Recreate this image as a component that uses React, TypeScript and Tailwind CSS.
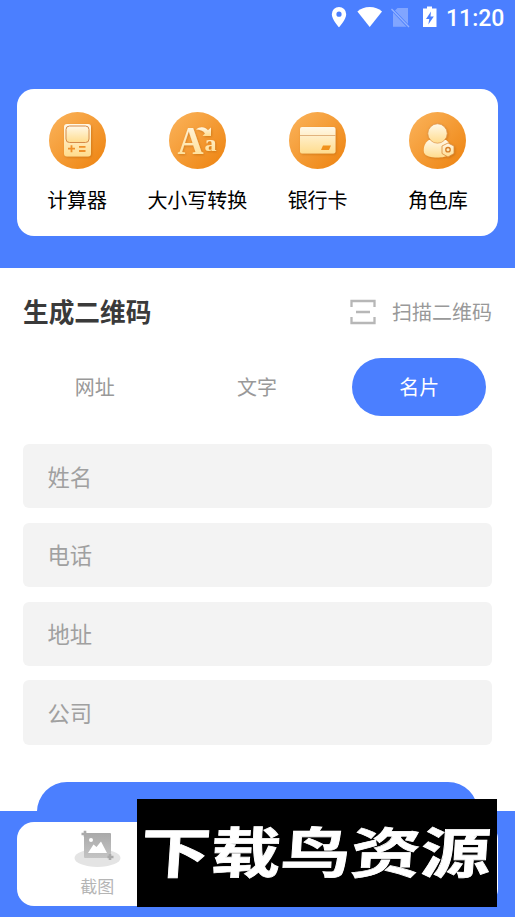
import { useState } from "react";
import type { ReactNode } from "react";

const tabs = ["网址", "文字", "名片"];
const fields = ["姓名", "电话", "地址", "公司"];

function StatusBar() {
    return (
        <div className="flex h-9 items-center justify-end pr-3 text-white">
            <svg className="h-9 w-[120px]" viewBox="0 0 120 36" fill="currentColor">
                <path fillRule="evenodd" d="M13 7a7.200 7.200 0 0 0-7.200 7.200c0 5.200 7.200 13 7.200 13s7.200-7.800 7.200-13A7.200 7.200 0 0 0 13 7Zm0 4.600a2.600 2.600 0 1 1 0 5.200 2.600 2.600 0 0 1 0-5.200Z" />
                <path d="M43.700 27 31.400 11.500C34.700 8.700 38.700 7 43.700 7S52.700 8.700 56 11.500Z" />
                <path opacity=".3" d="M71.500 8H82v16L69 10.500ZM67 12.500 80.500 26.700H67Z" />
                <path d="M65.500 9 83 27" stroke="currentColor" strokeWidth="1.300" opacity=".4" />
                <path fillRule="evenodd" d="M101 6.500h5v2h4.500V27H97V8.500h4Zm4 5-5 7.500h3.300l-1 5.500 5.500-8h-3.300Z" />
            </svg>
            <span className="w-[57px] text-right font-['Roboto',sans-serif] text-[23px] font-medium leading-none">11:20</span>
        </div>
    );
}

function Badge({ children }: { children: ReactNode }) {
    return (
        <svg className="size-[57px]" viewBox="0 0 57 57">
            <defs>
                <linearGradient id="orange" x1="0" y1="0" x2="1" y2="1">
                    <stop stopColor="#fbb45c" />
                    <stop offset="1" stopColor="#ed820e" />
                </linearGradient>
                <linearGradient id="cream" x1="0" y1="0" x2="0" y2="1">
                    <stop stopColor="#fff8e8" />
                    <stop offset="1" stopColor="#ffdc8d" />
                </linearGradient>
                <filter id="drop" x="-20%" y="-20%" width="150%" height="150%">
                    <feDropShadow dx=".8" dy="1" stdDeviation=".8" floodColor="#b35c00" floodOpacity=".5" />
                </filter>
            </defs>
            <circle cx="28.500" cy="28.500" r="28.500" fill="url(#orange)" />
            <g fill="url(#cream)" filter="url(#drop)">{children}</g>
        </svg>
    );
}

const tools = [
    {
        name: "计算器",
        icon: (
            <Badge>
                <rect x="15" y="12" width="27" height="32.500" rx="3" />
                <rect x="17" y="14" width="23" height="16.500" rx="3.500" stroke="#d58a48" strokeWidth="1" />
                <path d="M19 36.700h7M22.500 33.200v7M30 34.800h6.500M30 39h6.500" stroke="#ef9029" strokeWidth="1.800" fill="none" />
            </Badge>
        ),
    },
    {
        name: "大小写转换",
        icon: (
            <Badge>
                <text transform="translate(8.500 42) scale(.88 1)" fontFamily="Liberation Serif, serif" fontWeight="700" fontSize="41">A</text>
                <text x="35.500" y="38.500" fontFamily="Liberation Serif, serif" fontWeight="700" fontSize="24">a</text>
                <path d="M27 17.500c4-3.500 9-3 12 .8l3-2.800V24h-8.500l2.500-2.500c-2-3-5-4-9-4Z" />
            </Badge>
        ),
    },
    {
        name: "银行卡",
        icon: (
            <Badge>
                <rect x="11" y="15" width="35.500" height="26.500" rx="2" />
                <path d="M11 23.500h35.500" stroke="#d9a268" strokeWidth=".8" />
                <path d="M34 33.500h8l-2 4.500h-8Z" fill="#f0911f" />
            </Badge>
        ),
    },
    {
        name: "角色库",
        icon: (
            <Badge>
                <path d="M20 28h17c4 3 5 8 4 13-3 4-8 4.500-13 4.500s-12-1-13-5c-1-5 1-10 5-12.500Z" />
                <circle cx="28.500" cy="21.500" r="9.700" stroke="#dc9145" strokeWidth=".7" />
                <path d="m39 31 6 3v7.500L39 45l-6-3.500V34Z" stroke="#d98a3b" strokeWidth=".8" />
                <circle cx="39" cy="37.700" r="2.200" stroke="#d57b25" strokeWidth="1.300" />
            </Badge>
        ),
    },
];

function ScanIcon() {
    return (
        <svg className="h-[26px] w-[26px]" viewBox="0 0 26 26" fill="none" stroke="#b7b7b7" strokeWidth="2.300">
            <path d="M1.500 8V2h23v6M1.500 18v6h23v-6M6 13h14" />
        </svg>
    );
}

function CropIcon() {
    return (
        <svg className="h-[40px] w-[47px]" viewBox="0 0 47 40">
            <defs>
                <linearGradient id="gray" x1="0" y1="0" x2="0" y2="1">
                    <stop stopColor="#a9a9a9" />
                    <stop offset="1" stopColor="#c4c4c4" />
                </linearGradient>
            </defs>
            <ellipse cx="23.500" cy="28" rx="23" ry="9" fill="#e4e4e4" />
            <rect x="10" y="3" width="27" height="25" rx="1" fill="url(#gray)" />
            <path d="M7.500 4h5M11 .8v6M33.500 27h6M36 24v6" stroke="#aaa" strokeWidth="2.600" />
            <circle cx="17" cy="10" r="2" fill="#fff" />
            <path d="m14 23 5.500-8.500 3 2.500 4.500-5.500 6 11.500Z" fill="#fff" />
        </svg>
    );
}

export default function App() {
    const [active, setActive] = useState("名片");

    return (
        <div className="relative flex h-[917px] w-[515px] flex-col overflow-hidden bg-white font-['Noto_Sans_CJK_SC',sans-serif]">
            <header className="h-[268px] shrink-0 bg-[#4b7fff]">
                <StatusBar />
                <div className="mx-[17px] mt-[53px] grid h-[147px] grid-cols-4 rounded-[17px] bg-white pt-[23px]">
                    {tools.map((tool) => (
                        <div key={tool.name} className="flex flex-col items-center">
                            {tool.icon}
                            <span className="mt-4 whitespace-nowrap text-[20px] leading-[30px] text-black">{tool.name}</span>
                        </div>
                    ))}
                </div>
            </header>

            <main className="min-h-0 flex-1 overflow-hidden">
                <div className="flex h-[90px] items-center justify-between px-[23px] pb-[3px]">
                    <h1 className="pb-[2px] text-[25.700px] font-bold leading-none text-[#3a3a3a]">生成二维码</h1>
                    <button className="flex items-center gap-4 text-[20px] leading-none text-[#999]">
                        <ScanIcon />
                        扫描二维码
                    </button>
                </div>

                <div className="ml-[13.500px] mr-[14.500px] grid h-[57.500px] grid-cols-3">
                    {tabs.map((tab) => (
                        <button
                            key={tab}
                            onClick={() => setActive(tab)}
                            className={`mx-[14px] rounded-full text-[20px] ${active === tab ? "bg-[#4b7fff] text-white" : "text-[#999]"}`}
                        >
                            {tab}
                        </button>
                    ))}
                </div>

                <div className="mx-[23px] mt-[28.500px] flex flex-col gap-[14.500px]">
                    {fields.map((field) => (
                        <input
                            key={field}
                            placeholder={field}
                            className="h-[64.300px] rounded-md bg-[#f3f3f3] px-[24.500px] pb-px text-[22.300px] outline-none placeholder:text-[#a0a0a0]"
                        />
                    ))}
                </div>

                <button className="mx-[37px] mt-[37px] block h-[64px] w-[441px] rounded-[30px] bg-[#4b7fff]" />
            </main>

            <nav className="h-[106px] shrink-0 bg-[#4b7fff] px-[17px] pt-[11px]">
                <div className="grid h-[84px] grid-cols-3 rounded-[17px] bg-white">
                    <div className="flex flex-col items-center pt-2">
                        <CropIcon />
                        <span className="mt-1 text-[17px] leading-6 text-[#b5b5b5]">截图</span>
                    </div>
                </div>
            </nav>

            <div className="absolute left-[137px] top-[799px] flex h-[108px] w-[360px] items-center justify-center bg-black pb-[6px] pr-[3px]">
                <span className="-skew-x-3 scale-y-[0.78] whitespace-nowrap text-[70px] font-bold leading-none text-white [-webkit-text-stroke:1px_white]">下载鸟资源</span>
            </div>
        </div>
    );
}
